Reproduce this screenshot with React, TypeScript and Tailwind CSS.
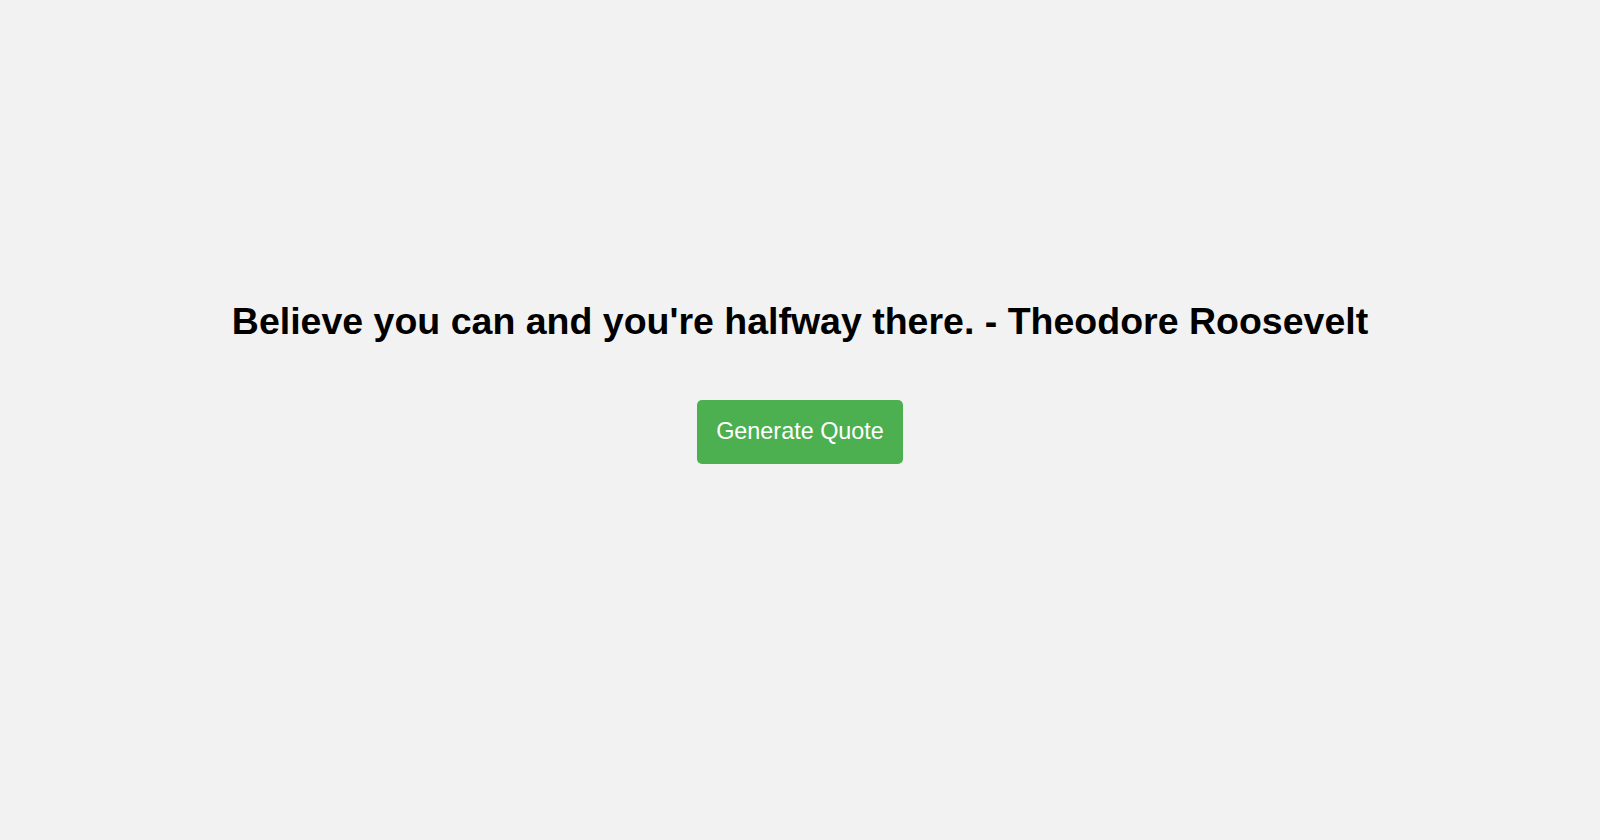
import { useState } from "react";

const QUOTES = [
  "Believe you can and you're halfway there. - Theodore Roosevelt",
  "The only way to do great work is to love what you do. - Steve Jobs",
  "It always seems impossible until it's done. - Nelson Mandela",
];

export default function App() {
  const [idx, setIdx] = useState(0);

  return (
    <div className="flex min-h-screen flex-col items-center bg-[#f2f2f2] pt-[300px] font-['Liberation_Sans',Arial,sans-serif]">
      <h1 className="text-center text-[37.5px] font-bold leading-[42px] text-black">
        {QUOTES[idx]}
      </h1>
      <button
        onClick={() => setIdx((i) => (i + 1) % QUOTES.length)}
        className="mt-[58px] h-[64px] cursor-pointer rounded-[5px] bg-[#4caf50] px-[19px] text-[23.4px] text-white"
      >
        Generate Quote
      </button>
    </div>
  );
}
